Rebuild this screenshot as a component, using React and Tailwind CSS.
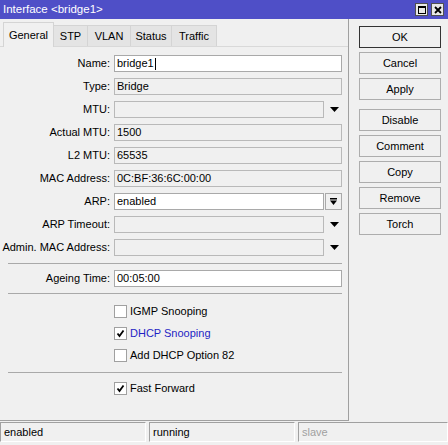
import React from "react";

const tabs = [
  { name: "General", w: "w-[51px]", active: true },
  { name: "STP", w: "w-[34px]" },
  { name: "VLAN", w: "w-[43px]" },
  { name: "Status", w: "w-[41px]" },
  { name: "Traffic", w: "w-[45px]" },
];

const DownArrow = () => (
  <svg width="9" height="5" viewBox="0 0 9 5">
    <polygon points="0,0 9,0 4.5,5" fill="#000" />
  </svg>
);

const Field = ({ label, value, editable, arrow, button, cursor }) => (
  <div className="flex items-center h-[17px]">
    <div className="w-[110px] text-right whitespace-nowrap">{label}</div>
    <div
      className={`ml-[4px] h-[17px] flex items-center pl-[2px] border border-[#a9a9a9] ${
        editable ? "bg-white" : "bg-[#f0f0f0] border-[#b9b9b9]"
      } ${arrow || button ? "w-[210px]" : "w-[228px]"}`}
    >
      <span className="leading-none">{value}</span>
      {cursor && <span className="ml-[1px] w-[1px] h-[12px] bg-black" />}
    </div>
    {arrow && (
      <div className="w-[18px] h-[17px] flex items-center justify-center pl-[2px]">
        <DownArrow />
      </div>
    )}
    {button && (
      <div className="ml-[1px] w-[17px] h-[17px] flex items-center justify-center border border-[#a9a9a9] bg-[#f0f0f0]">
        <svg width="9" height="9" viewBox="0 0 9 9">
          <rect x="1" y="1" width="7" height="1.5" fill="#000" />
          <polygon points="1,3.5 8,3.5 4.5,8" fill="#000" />
        </svg>
      </div>
    )}
  </div>
);

const Check = ({ label, checked, blue, className = "" }) => (
  <div className={`flex items-center h-[17px] ${className}`}>
    <div className="ml-[114px] w-[13px] h-[13px] bg-white border border-[#a0a0a0] flex items-center justify-center">
      {checked && (
        <svg width="9" height="9" viewBox="0 0 9 9">
          <polyline points="1.5,4.5 3.5,7 7.5,1.5" fill="none" stroke="#000" strokeWidth="1.8" />
        </svg>
      )}
    </div>
    <span className={`ml-[3px] ${blue ? "text-[#1f1fc4]" : "text-black"}`}>{label}</span>
  </div>
);

const Sep = ({ className = "" }) => <div className={`ml-[8px] w-[334px] h-[1px] bg-[#a9a9a9] ${className}`} />;

const Btn = ({ children, def, className = "" }) => (
  <div
    className={`w-[82px] h-[22px] flex items-center justify-center bg-[#f0f0f0] border ${
      def ? "border-[#333333]" : "border-[#adadad]"
    } ${className}`}
  >
    {children}
  </div>
);

export default function App() {
  return (
    <div className="w-[448px] h-[445px] overflow-hidden flex flex-col bg-[#f0f0f0] text-black text-[11px] font-['Liberation_Sans',sans-serif]">
      {/* title bar */}
      <div className="h-[19px] shrink-0 bg-[#4f4fc7] flex items-center pl-[3px] pr-[4px]">
        <span className="text-white text-[11.5px]">Interface &lt;bridge1&gt;</span>
        <div className="ml-auto flex gap-[3px]">
          <div className="w-[13px] h-[13px] bg-[#e8e8e8] border border-[#505050] flex items-center justify-center">
            <div className="w-[8px] h-[8px] border border-black border-t-2" />
          </div>
          <div className="w-[13px] h-[13px] bg-[#e8e8e8] border border-[#505050] flex items-center justify-center">
            <svg width="8" height="8" viewBox="0 0 8 8">
              <path d="M1 1 L7 7 M7 1 L1 7" stroke="#000" strokeWidth="1.8" />
            </svg>
          </div>
        </div>
      </div>

      <div className="flex h-[402px] shrink-0">
        {/* panel */}
        <div className="w-[349px] flex flex-col border-r border-b border-[#a0a0a0]">
          <div className="h-[27px] flex items-end pl-[3px]">
            {tabs.map((t) =>
              t.active ? (
                <div
                  key={t.name}
                  className={`${t.w} h-[25px] -mb-[1px] relative flex items-center justify-center bg-[#f0f0f0] border border-b-0 border-[#d4d4d4]`}
                >
                  {t.name}
                </div>
              ) : (
                <div
                  key={t.name}
                  className={`${t.w} h-[21px] flex items-center justify-center bg-[#e4e4e4] border border-l-0 border-b-0 border-[#d4d4d4]`}
                >
                  {t.name}
                </div>
              )
            )}
          </div>
          <div className="flex-1 border-t border-[#d9d9d9] pt-[8px] flex flex-col">
            <div className="flex flex-col gap-[6px]">
              <Field label="Name:" value="bridge1" editable cursor />
              <Field label="Type:" value="Bridge" />
              <Field label="MTU:" value="" arrow />
              <Field label="Actual MTU:" value="1500" />
              <Field label="L2 MTU:" value="65535" />
              <Field label="MAC Address:" value="0C:BF:36:6C:00:00" />
              <Field label="ARP:" value="enabled" editable button />
              <Field label="ARP Timeout:" value="" arrow />
              <Field label="Admin. MAC Address:" value="" arrow />
            </div>
            <Sep className="mt-[7px]" />
            <div className="mt-[6px]">
              <Field label="Ageing Time:" value="00:05:00" editable />
            </div>
            <Sep className="mt-[6px]" />
            <Check label="IGMP Snooping" className="mt-[9px]" />
            <Check label="DHCP Snooping" checked blue className="mt-[5px]" />
            <Check label="Add DHCP Option 82" className="mt-[5px]" />
            <Sep className="mt-[8px]" />
            <Check label="Fast Forward" checked className="mt-[7px]" />
          </div>
        </div>

        {/* buttons */}
        <div className="ml-[10px] pt-[7px] flex flex-col">
          <Btn def>OK</Btn>
          <Btn className="mt-[4px]">Cancel</Btn>
          <Btn className="mt-[4px]">Apply</Btn>
          <Btn className="mt-[9px]">Disable</Btn>
          <Btn className="mt-[4px]">Comment</Btn>
          <Btn className="mt-[4px]">Copy</Btn>
          <Btn className="mt-[4px]">Remove</Btn>
          <Btn className="mt-[4px]">Torch</Btn>
        </div>
      </div>

      {/* status bar */}
      <div className="flex pt-[1px] gap-[3px]">
        <div className="w-[146px] h-[20px] flex items-center pl-[3px] border-t border-l border-[#a0a0a0] border-b border-b-[#ffffff] border-r border-r-[#ffffff]">
          enabled
        </div>
        <div className="w-[146px] h-[20px] flex items-center pl-[3px] border-t border-l border-[#a0a0a0] border-b border-b-[#ffffff] border-r border-r-[#ffffff]">
          running
        </div>
        <div className="w-[150px] h-[20px] flex items-center pl-[3px] text-[#a0a0a0] border-t border-l border-[#a0a0a0] border-b border-b-[#ffffff] border-r border-r-[#ffffff]">
          slave
        </div>
      </div>
    </div>
  );
}
